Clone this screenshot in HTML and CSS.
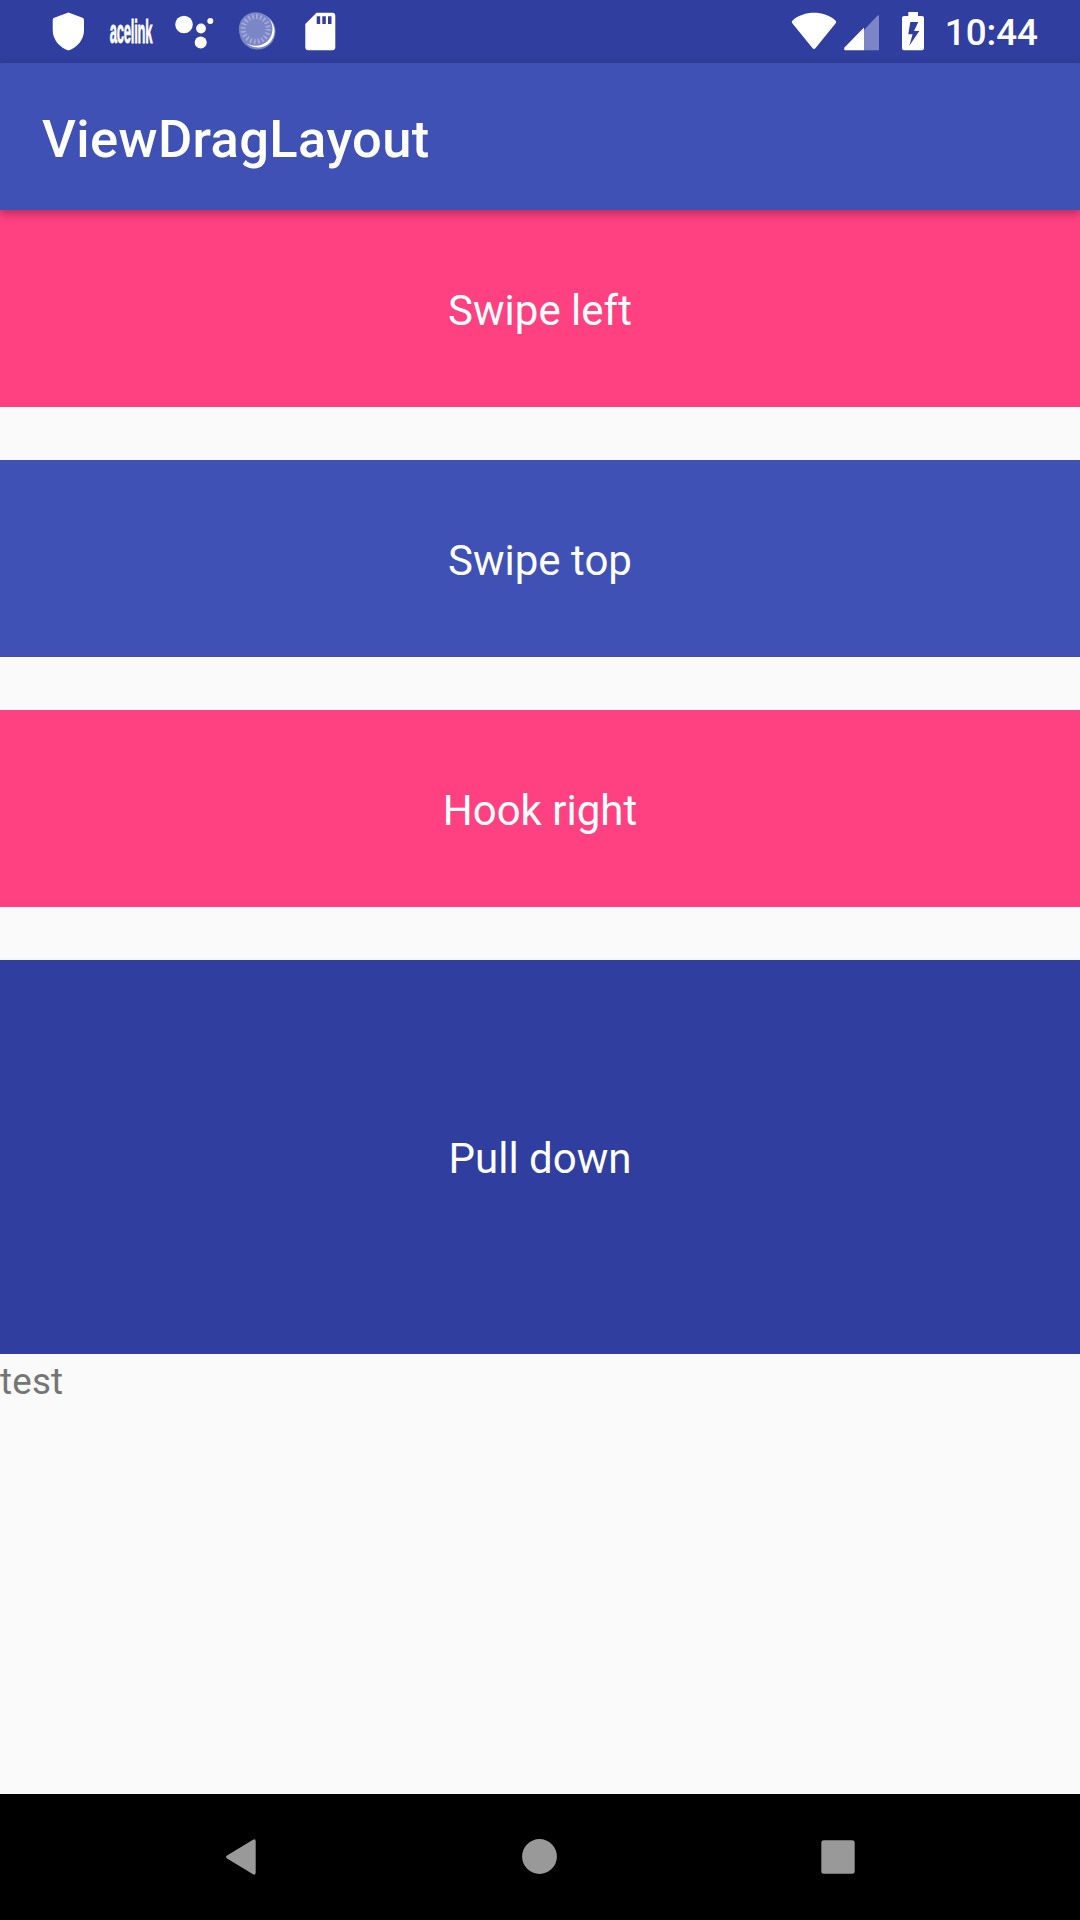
FILE: index.html
```html
<!DOCTYPE html>
<html lang="en">
<head>
<meta charset="utf-8">
<title>ViewDragLayout</title>
<link rel="stylesheet" href="styles.css">
</head>
<body>
<div class="screen">
  <div class="status-bar">
    <div class="notifications">
      <svg class="slot" viewBox="0 0 63 63"><path fill="currentColor" d="M31.4 12.5 45.5 17.8Q47 18.4 47 20V30C47 40 40 47.500 31.400 50.500C22.700 47.500 15.700 40 15.700 30V20Q15.700 18.400 17.200 17.800Z"/></svg>
      <svg class="slot" viewBox="0 0 63 63"><text class="brand" transform="translate(9.800 43) scale(.383 1)">acelink</text></svg>
      <svg class="slot" viewBox="0 0 63 63" fill="currentColor"><circle cx="21" cy="24.500" r="8.800"/><circle cx="38" cy="28.500" r="4.900"/><circle cx="47.300" cy="21" r="3"/><circle cx="37.700" cy="42.500" r="6"/></svg>
      <svg class="slot" viewBox="0 0 63 63"><circle cx="31.500" cy="31.500" r="18" fill="#7c86c6"/><circle cx="32" cy="31" r="16.500" fill="#fff"/><circle cx="29.700" cy="29" r="16.800" fill="#7c86c6"/><circle cx="29.700" cy="29" r="12.500" fill="none" stroke="#a3abd9" stroke-width="5" stroke-dasharray="1.700 2.227"/></svg>
      <svg class="slot" viewBox="0 0 63 63"><path fill="currentColor" fill-rule="evenodd" d="M27.500 12.700H43.300Q46.300 12.700 46.300 15.700V47.300Q46.300 50.300 43.300 50.300H19.300Q16.300 50.300 16.300 47.300V24ZM27.700 16.300V24H31.200V16.300ZM33.300 16.300V24H36.800V16.300ZM39 16.300V24H42.500V16.300Z"/></svg>
    </div>
    <div class="system">
      <svg class="wifi" viewBox="0 0 53 63"><path fill="currentColor" d="M5.300 23.200Q4 21.600 5.600 20.400C17 10.200 37 10.200 48.400 20.400Q50 21.600 48.700 23.200L28.600 48Q27 49.800 25.400 48Z"/></svg>
      <svg class="signal" viewBox="0 0 53 63"><path fill="#7c86c6" d="M24 30 37.300 15.800Q39 14.300 39 16.500V50.200H24Z"/><path fill="currentColor" d="M24 27.500V50.200H5Q3.300 49.500 4.500 47.500Z"/></svg>
      <svg class="battery" viewBox="0 0 50 63"><path fill="currentColor" fill-rule="evenodd" d="M15.300 12H25V16H29Q31 16 31 18V48.200Q31 50.200 29 50.200H11Q9 50.200 9 48.200V18Q9 16 11 16H15.300ZM17.300 22 15.300 34.200H19.600L16.300 45.700 26.300 31H21L25.300 22Z"/></svg>
      <span class="clock">10:44</span>
    </div>
  </div>
  <header class="toolbar"><h1>ViewDragLayout</h1></header>
  <main class="content">
    <div class="panel accent">Swipe left</div>
    <div class="panel primary">Swipe top</div>
    <div class="panel accent">Hook right</div>
    <div class="panel dark tall">Pull down</div>
    <p class="note">test</p>
  </main>
  <nav class="nav-bar">
    <svg viewBox="0 0 48 48"><path d="M9 25.500Q7 24 9 22.500L35 6.700Q37.700 5.500 37.700 8.500V39.500Q37.700 42.500 35 41.300Z"/></svg>
    <svg viewBox="0 0 48 48"><circle cx="23.500" cy="23.500" r="17.400"/></svg>
    <svg viewBox="0 0 48 48"><rect x="7.300" y="7.300" width="33.400" height="33.400" rx="2.500"/></svg>
  </nav>
</div>
</body>
</html>
```
FILE: styles.css
```css
* {
  box-sizing: border-box;
}

body {
  margin: 0;
  font-family: Roboto, sans-serif;
}

.screen {
  display: flex;
  flex-direction: column;
  width: 1080px;
  height: 1920px;
  overflow: hidden;
  background: #fafafa;
}

.status-bar {
  display: flex;
  justify-content: space-between;
  height: 63px;
  padding: 0 42px 0 37px;
  background: #303f9f;
  color: #fff;
}

.notifications,
.system {
  display: flex;
}

.slot {
  width: 63px;
  height: 63px;
}

.brand {
  font: bold 34px "Liberation Sans", sans-serif;
  letter-spacing: -.6px;
  fill: #fff;
  stroke: #fff;
  stroke-width: .8px;
}

.wifi,
.signal {
  width: 53px;
  height: 63px;
}

.battery {
  width: 50px;
  height: 63px;
}

.clock {
  width: 95px;
  padding-top: 3px;
  font-size: 36.75px;
  font-weight: 500;
  line-height: 60px;
  text-align: right;
}

.toolbar {
  position: relative;
  display: flex;
  align-items: center;
  height: 147px;
  padding: 4px 42px 0;
  background: #3f51b5;
  color: #fff;
  box-shadow: 0 3px 9px rgba(0, 0, 0, .32);
}

.toolbar h1 {
  margin: 0;
  font-size: 52.5px;
  font-weight: 500;
  letter-spacing: .38px;
}

.content {
  flex: 1;
}

.panel {
  display: flex;
  align-items: center;
  justify-content: center;
  height: 197px;
  margin-bottom: 53px;
  padding-top: 4px;
  color: #fff;
  font-size: 42px;
}

.accent {
  background: #ff4081;
}

.primary {
  background: #3f51b5;
}

.dark {
  background: #303f9f;
}

.tall {
  height: 394px;
  margin-bottom: 0;
  padding-top: 2px;
}

.note {
  margin: 0;
  padding-top: 6px;
  color: #757575;
  font-size: 36.75px;
  letter-spacing: .2px;
  line-height: 44px;
}

.nav-bar {
  display: flex;
  align-items: center;
  justify-content: center;
  gap: 250px;
  height: 126px;
  background: #000;
}

.nav-bar svg {
  width: 48px;
  height: 48px;
  fill: #999;
}
```
